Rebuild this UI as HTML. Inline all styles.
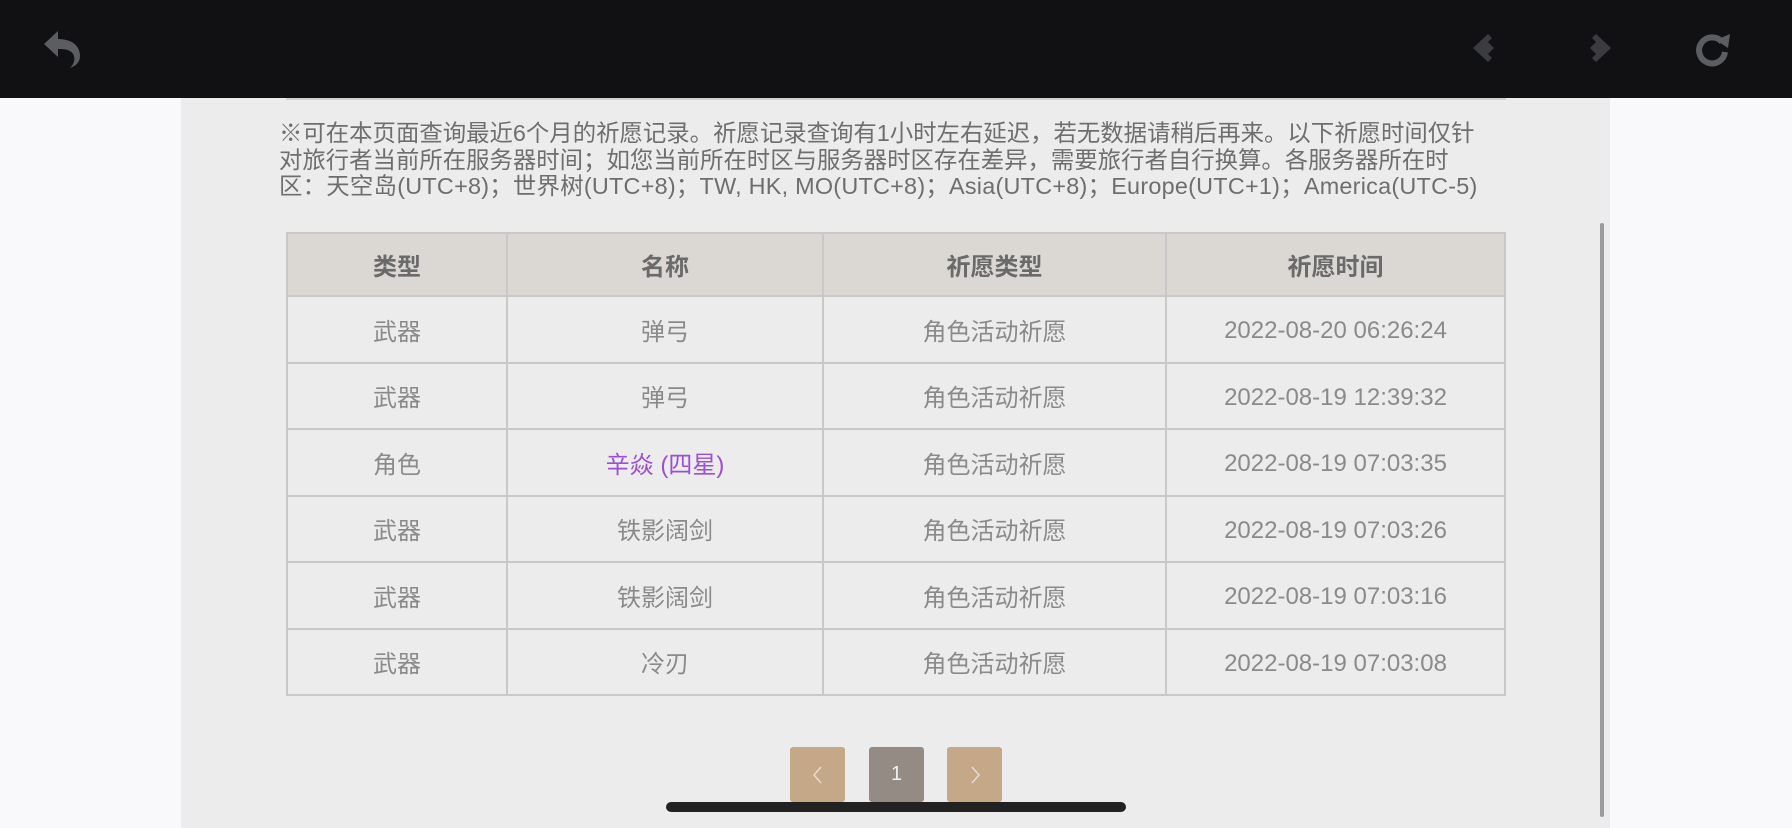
<!DOCTYPE html>
<html><head><meta charset="utf-8"><style>
*{margin:0;padding:0;box-sizing:border-box}
body{width:1792px;height:828px;overflow:hidden;background:#f9f9fb;position:relative;font-family:"Liberation Sans","Noto Sans CJK SC",sans-serif}
.hdr{position:absolute;left:0;top:0;width:1792px;height:98px;background:#111114}
.panel{position:absolute;left:181px;top:98px;width:1429px;height:730px;background:#ececec}
.line{position:absolute;left:286px;top:98px;width:1220px;height:2px;background:#d0d0d0}
.note{position:absolute;left:279px;top:120px;white-space:nowrap;font-size:23.4px;line-height:26.5px;color:#6e6e6e}
.note span{letter-spacing:0.25px}
table{position:absolute;left:286px;top:232px;width:1220px;border-collapse:collapse;font-size:24px;color:#8a8a8a;text-align:center}
td,th{border:2px solid #c8c8c8}
th{background:#dbd8d4;color:#6a6a6a;height:63px;font-weight:bold}
td{height:66.5px;background:#ececec}
td:nth-child(4){padding-top:4px}
.p{color:#9a4fd6}
.btn{position:absolute;top:747px;width:55px;height:55px;border-radius:3px;color:#f0f0f0;font-size:22px;text-align:center;line-height:55px}
.btn svg{position:absolute;left:20px;top:18px}
.sb{position:absolute;left:1600px;top:223px;width:4px;height:594px;border-radius:2px;background:#9b9b9b}
.hi{position:absolute;left:666px;top:802px;width:460px;height:10px;border-radius:5px;background:#222}
</style></head><body>
<div class="hdr">
<svg style="position:absolute;left:40px;top:28px" width="44" height="42" viewBox="0 0 44 42"><path d="M4 16 L18 3 L18 11 C32 11 40 18 40 28 C40 34 36 38 30 40 C34 36 35 32 34 28 C32 22 26 21 18 21 L18 29 Z" fill="#5c5d60"/></svg>
<svg style="position:absolute;left:1468px;top:30px" width="36" height="36" viewBox="0 0 36 36"><path d="M20 4 L5 18 L20 32 L24 28 L14 18 L24 8 Z M20 12 L26 18 L20 24 L14 18Z" fill="#3b3c3f"/></svg>
<svg style="position:absolute;left:1580px;top:30px" width="36" height="36" viewBox="0 0 36 36"><path d="M16 4 L31 18 L16 32 L12 28 L22 18 L12 8 Z M16 12 L22 18 L16 24 L10 18Z" fill="#3b3c3f"/></svg>
<svg style="position:absolute;left:1694px;top:30px" width="38" height="38" viewBox="0 0 38 38"><path d="M28 12 A13 13 0 1 0 31 22" fill="none" stroke="#5c5d60" stroke-width="6"/><path d="M22 10 L36 4 L34 18 Z" fill="#5c5d60"/></svg>
</div>
<div class="panel"></div>
<div class="line"></div>
<div class="note">※可在本页面查询最近6个月的祈愿记录。祈愿记录查询有1小时左右延迟，若无数据请稍后再来。以下祈愿时间仅针<br>对旅行者当前所在服务器时间；如您当前所在时区与服务器时区存在差异，需要旅行者自行换算。各服务器所在时<br><span>区：天空岛(UTC+8)；世界树(UTC+8)；TW, HK, MO(UTC+8)；Asia(UTC+8)；Europe(UTC+1)；America(UTC-5)</span></div>
<table>
<tr><th style="width:220px">类型</th><th style="width:316px">名称</th><th style="width:343px">祈愿类型</th><th>祈愿时间</th></tr>
<tr><td>武器</td><td>弹弓</td><td>角色活动祈愿</td><td>2022-08-20 06:26:24</td></tr>
<tr><td>武器</td><td>弹弓</td><td>角色活动祈愿</td><td>2022-08-19 12:39:32</td></tr>
<tr><td>角色</td><td class="p">辛焱 (四星)</td><td>角色活动祈愿</td><td>2022-08-19 07:03:35</td></tr>
<tr><td>武器</td><td>铁影阔剑</td><td>角色活动祈愿</td><td>2022-08-19 07:03:26</td></tr>
<tr><td>武器</td><td>铁影阔剑</td><td>角色活动祈愿</td><td>2022-08-19 07:03:16</td></tr>
<tr><td>武器</td><td>冷刃</td><td>角色活动祈愿</td><td>2022-08-19 07:03:08</td></tr>
</table>
<div class="btn" style="left:790px;background:#c4a888"><svg width="16" height="20" viewBox="0 0 16 20"><path d="M11 2 L4 10 L11 18" fill="none" stroke="#e8dccd" stroke-width="1.5"/></svg></div>
<div class="btn" style="left:869px;background:#948c84;font-size:20px">1</div>
<div class="btn" style="left:947px;background:#c4a888"><svg width="16" height="20" viewBox="0 0 16 20"><path d="M5 2 L12 10 L5 18" fill="none" stroke="#e8dccd" stroke-width="1.5"/></svg></div>
<div class="sb"></div>
<div class="hi"></div>
</body></html>
